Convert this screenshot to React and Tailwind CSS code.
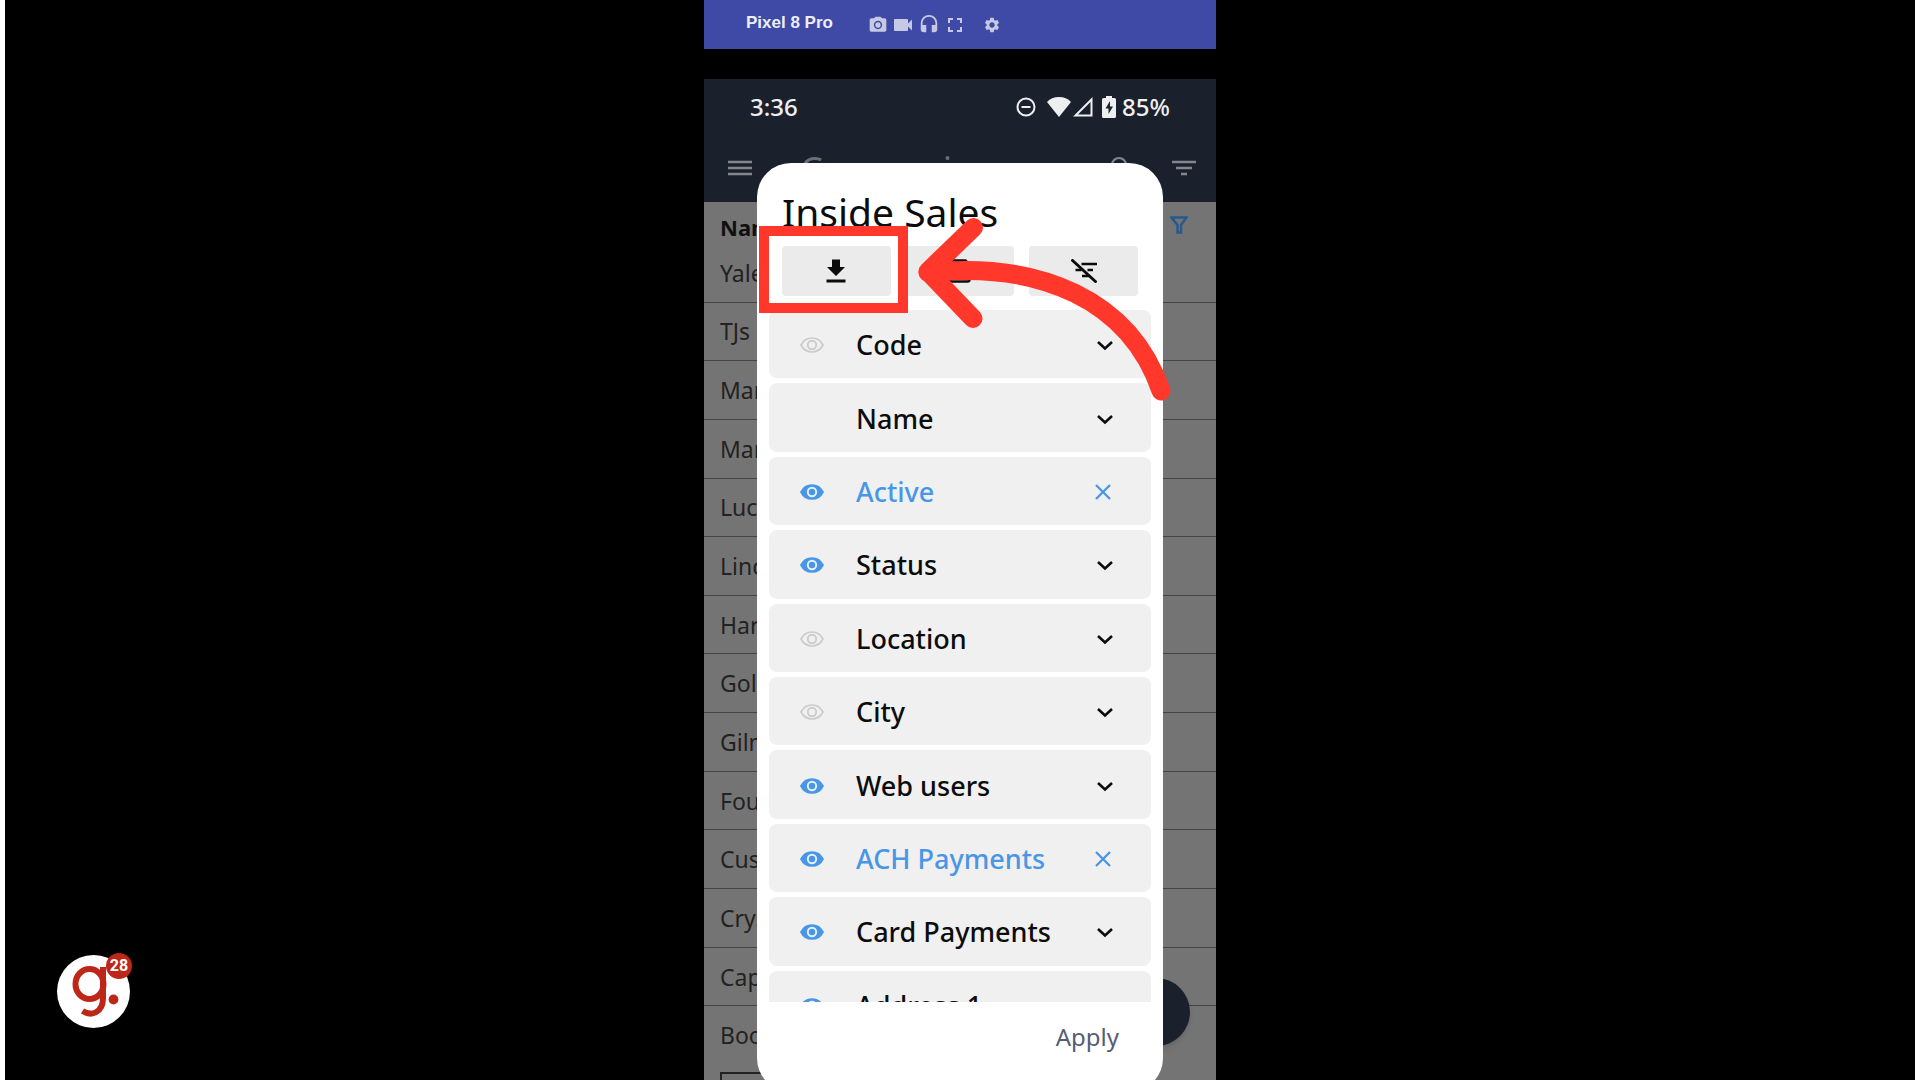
import React from "react";
import { MdPhotoCamera, MdVideocam, MdHeadset, MdFullscreen, MdSettings } from "react-icons/md";

const companies = ["Yale", "TJs", "Mar", "Mar", "Luca", "Linc", "Harr", "Gold", "Gilm", "Four", "Cust", "Crys", "Capi", "Book"];

const fields = [
  { name: "Code", eye: "off" },
  { name: "Name", eye: "none" },
  { name: "Active", eye: "on", filtered: true },
  { name: "Status", eye: "on" },
  { name: "Location", eye: "off" },
  { name: "City", eye: "off" },
  { name: "Web users", eye: "on" },
  { name: "ACH Payments", eye: "on", filtered: true },
  { name: "Card Payments", eye: "on" },
  { name: "Address 1", eye: "on" },
];

function Eye({ state }) {
  if (state === "none") return <span className="w-6" />;
  const on = state === "on";
  return (
    <button aria-label={on ? "Hide column" : "Show column"} className={on ? "text-[#4a96e6]" : "text-[#cccccc]"}>
      <svg viewBox="0 0 24 16" className="h-4 w-6" fill="none" aria-hidden="true">
        <path
          d="M1 8C3.500 3 7.500 1 12 1s8.500 2 11 7c-2.500 5-6.500 7-11 7S3.500 13 1 8Z"
          fill={on ? "currentColor" : "none"}
          stroke="currentColor"
          strokeWidth="1.700"
        />
        <circle cx="12" cy="8" r="4.200" stroke={on ? "#e8f3fd" : "currentColor"} strokeWidth="1.900" />
      </svg>
    </button>
  );
}

function FieldRow({ field }) {
  return (
    <li className={`flex items-center rounded-lg bg-[#f0f0f0] pt-0.5 pr-9 pl-[31px] ${field.filtered ? "text-[#4a96e6]" : "text-[#0c0c0c]"}`}>
      <Eye state={field.eye} />
      <span className="ml-8 flex-1 text-[27px] leading-9 font-medium whitespace-nowrap">{field.name}</span>
      <button aria-label={field.filtered ? `Clear ${field.name}` : `Expand ${field.name}`}>
        {field.filtered ? (
          <svg viewBox="0 0 20 16" className="h-4 w-5" fill="none" stroke="currentColor" strokeWidth="2.300" aria-hidden="true">
            <path d="M1 1l14 14M15 1L1 15" />
          </svg>
        ) : (
          <svg viewBox="0 0 20 16" className="h-4 w-5" fill="none" stroke="currentColor" strokeWidth="2.600" aria-hidden="true">
            <path d="M3 5l7 6.500L17 5" />
          </svg>
        )}
      </button>
    </li>
  );
}

function StatusBar() {
  return (
    <div className="flex h-14 items-center justify-between px-[46px] text-[24px] font-medium text-[#eeeff1]">
      <span>3:36</span>
      <div className="flex items-center">
        <svg viewBox="0 0 20 20" className="mr-[11px] size-5" fill="none" stroke="currentColor" strokeWidth="2" aria-hidden="true">
          <circle cx="10" cy="10" r="8.500" />
          <path d="M5.500 10h9" />
        </svg>
        <svg viewBox="0 0 24 20" className="mr-0.5 h-5 w-6" fill="currentColor" aria-hidden="true">
          <path d="M0 5C3 1.500 7 0 12 0s9 1.500 12 5L12 20Z" />
        </svg>
        <svg viewBox="0 0 20 20" className="mr-[9px] size-5" fill="none" stroke="currentColor" strokeWidth="2" aria-hidden="true">
          <path d="M18.500 2.500v16H2.500Z" />
        </svg>
        <svg viewBox="0 0 14 22" className="mr-[6px] h-[22px] w-3.5" aria-hidden="true">
          <path d="M4 0h6v2h2.500A1.500 1.500 0 0 1 14 3.500v17a1.500 1.500 0 0 1-1.500 1.500h-11A1.500 1.500 0 0 1 0 20.500v-17A1.500 1.500 0 0 1 1.500 2H4Z" fill="currentColor" />
          <path d="M8 5L3.500 12.500H6.500V18l4.500-7.500H8Z" fill="#1b202d" />
        </svg>
        <span>85%</span>
      </div>
    </div>
  );
}

function CompanyScreen() {
  return (
    <div className="flex min-h-0 flex-1 flex-col bg-[#747474]">
      <header className="bg-[#1b202d]">
        <StatusBar />
        <div className="flex h-[67px] items-center pr-5 pb-px pl-6 text-[#84868d]">
          <button aria-label="Menu">
            <svg viewBox="0 0 24 16" className="h-4 w-6" stroke="currentColor" strokeWidth="2.400" aria-hidden="true">
              <path d="M0 2h24M0 8h24M0 14h24" />
            </svg>
          </button>
          <h1 className="ml-12 flex-1 pt-1 text-[36px] leading-10 text-[#6b6e77]">Companies</h1>
          <button aria-label="Search" className="mr-[38px]">
            <svg viewBox="0 0 24 24" className="size-6" fill="none" stroke="currentColor" strokeWidth="2.200" aria-hidden="true">
              <circle cx="9" cy="9" r="7" />
              <path d="M14 14l8 8" />
            </svg>
          </button>
          <button aria-label="Filter">
            <svg viewBox="0 0 24 16" className="h-4 w-6" stroke="currentColor" strokeWidth="2.400" aria-hidden="true">
              <path d="M0 2h24M4 8h16M9 14h6" />
            </svg>
          </button>
        </div>
      </header>
      <div className="flex h-[42px] items-end justify-between pr-7 pl-4 text-[22px] font-bold text-[#101010]">
        <span>Name</span>
        <svg viewBox="0 0 18 18" className="mb-2.5 size-[18px]" fill="none" stroke="#28588c" strokeWidth="2.500" aria-hidden="true">
          <path d="M1.500 1.500h15L11 9v7.500H7.500V9Z" />
        </svg>
      </div>
      <ul className="flex min-h-0 flex-1 flex-col pb-[7px]">
        {companies.map((company, i) => (
          <li key={i} className="flex min-h-0 flex-1 items-center border-b border-[#444] pl-4 text-[23px] leading-7 text-[#222] last:border-transparent">
            {company}
          </li>
        ))}
      </ul>
      <div className="ml-4 h-2 w-24 border-t-2 border-l-2 border-[#222]" />
    </div>
  );
}

function FilterDialog() {
  return (
    <section aria-label="Inside Sales" className="absolute top-[163px] right-[53px] left-[53px] -bottom-3 flex flex-col rounded-[34px] bg-white px-3">
      <h2 className="mt-[23px] px-[13px] text-[39px] leading-[52px] text-[#0c0c0c]">Inside Sales</h2>
      <div className="mt-2 grid grid-cols-3 gap-[15px] px-[13px]">
        <button aria-label="Download" className="flex h-[50px] items-center justify-center rounded bg-[#ebebeb]">
          <svg viewBox="0 0 20 24" className="h-6 w-5" fill="#0c0c0c" aria-hidden="true">
            <path d="M6 0.500h8V8H19l-9 9-9-9h5ZM0.500 20.500h19v3H0.500Z" />
          </svg>
        </button>
        <button aria-label="Save" className="flex h-[50px] items-center justify-center rounded bg-[#ebebeb]">
          <svg viewBox="0 0 24 24" className="size-6" fill="none" stroke="#0c0c0c" strokeWidth="2.500" aria-hidden="true">
            <path d="M4 1.500h13.500l4 4v15a2 2 0 0 1-2 2H4a2 2 0 0 1-2-2v-17a2 2 0 0 1 2-2Z" />
          </svg>
        </button>
        <button aria-label="Clear filters" className="flex h-[50px] items-center justify-center rounded bg-[#ebebeb]">
          <svg viewBox="0 0 26 24" className="h-6 w-[26px]" fill="none" stroke="#0c0c0c" strokeWidth="2.300" aria-hidden="true">
            <path d="M10.500 5H26M4.500 11h6M16.500 11h5.500M11 17h7.500" />
            <path d="M0.500 0.500L25.500 23.500" strokeWidth="2.800" />
          </svg>
        </button>
      </div>
      <div className="mt-3.5 min-h-0 flex-1 overflow-hidden">
        <ul className="grid h-[729px] auto-rows-fr gap-[5px]">
          {fields.map((field) => (
            <FieldRow key={field.name} field={field} />
          ))}
        </ul>
      </div>
      <div className="flex h-[90px] items-start justify-end pt-[17px] pr-8">
        <button className="text-[24px] leading-9 text-[#565c74]">Apply</button>
      </div>
    </section>
  );
}

function GuideBadge() {
  return (
    <button aria-label="Open guide, 28 notifications" className="absolute bottom-[52px] left-[52px] size-[73px] rounded-full bg-white">
      <svg viewBox="0 0 73 73" className="size-full" fill="none" stroke="#bd271a" strokeWidth="6" aria-hidden="true">
        <ellipse cx="32.500" cy="29" rx="14" ry="15" />
        <path d="M46 12V43C46 57 35 62 25.500 56" />
        <circle cx="56.500" cy="44.500" r="4.900" fill="#bd271a" stroke="none" />
      </svg>
      <span className="absolute -top-0.5 left-[49px] flex size-[26px] items-center justify-center rounded-full bg-[#bd271a] font-['Roboto',sans-serif] text-base font-bold text-white">
        28
      </span>
    </button>
  );
}

export default function App() {
  return (
    <main className="relative flex h-screen justify-center overflow-hidden border-x-[5px] border-white bg-black font-['Noto_Sans',sans-serif]">
      <div className="relative flex h-full w-[512px] flex-col">
        <div className="flex h-[49px] items-center bg-[#3e4aa5] pl-[42px] text-[#c5c9e4]">
          <span className="w-[122px] pb-1 font-['Liberation_Sans',sans-serif] text-[17px] font-bold text-[#eceef8]">Pixel 8 Pro</span>
          <div className="flex items-center gap-[3px]">
            <MdPhotoCamera className="size-5" />
            <MdVideocam className="size-6" />
            <MdHeadset className="size-[22px]" />
            <MdFullscreen className="size-6" />
            <MdSettings className="ml-[13px] size-[18px]" />
          </div>
        </div>
        <div className="h-[30px]" />
        <CompanyScreen />
        <button aria-label="Add company" className="absolute right-[26px] bottom-[34px] size-[68px] rounded-full bg-[#1b202d] shadow-md" />
        <FilterDialog />
        <div className="absolute top-[226px] left-[55px] h-[87px] w-[149px] border-[10px] border-[#ff382b]" />
        <svg viewBox="0 0 256 190" className="absolute top-[215px] left-[211px] h-[190px] w-[256px]" fill="none" stroke="#ff382b" strokeWidth="19" strokeLinecap="round" strokeLinejoin="round" aria-hidden="true">
          <path d="M58.500 12.500L13 56.500L58 103.500" />
          <path d="M13 57.500C125 46 215 85 246 176" />
        </svg>
      </div>
      <GuideBadge />
    </main>
  );
}
